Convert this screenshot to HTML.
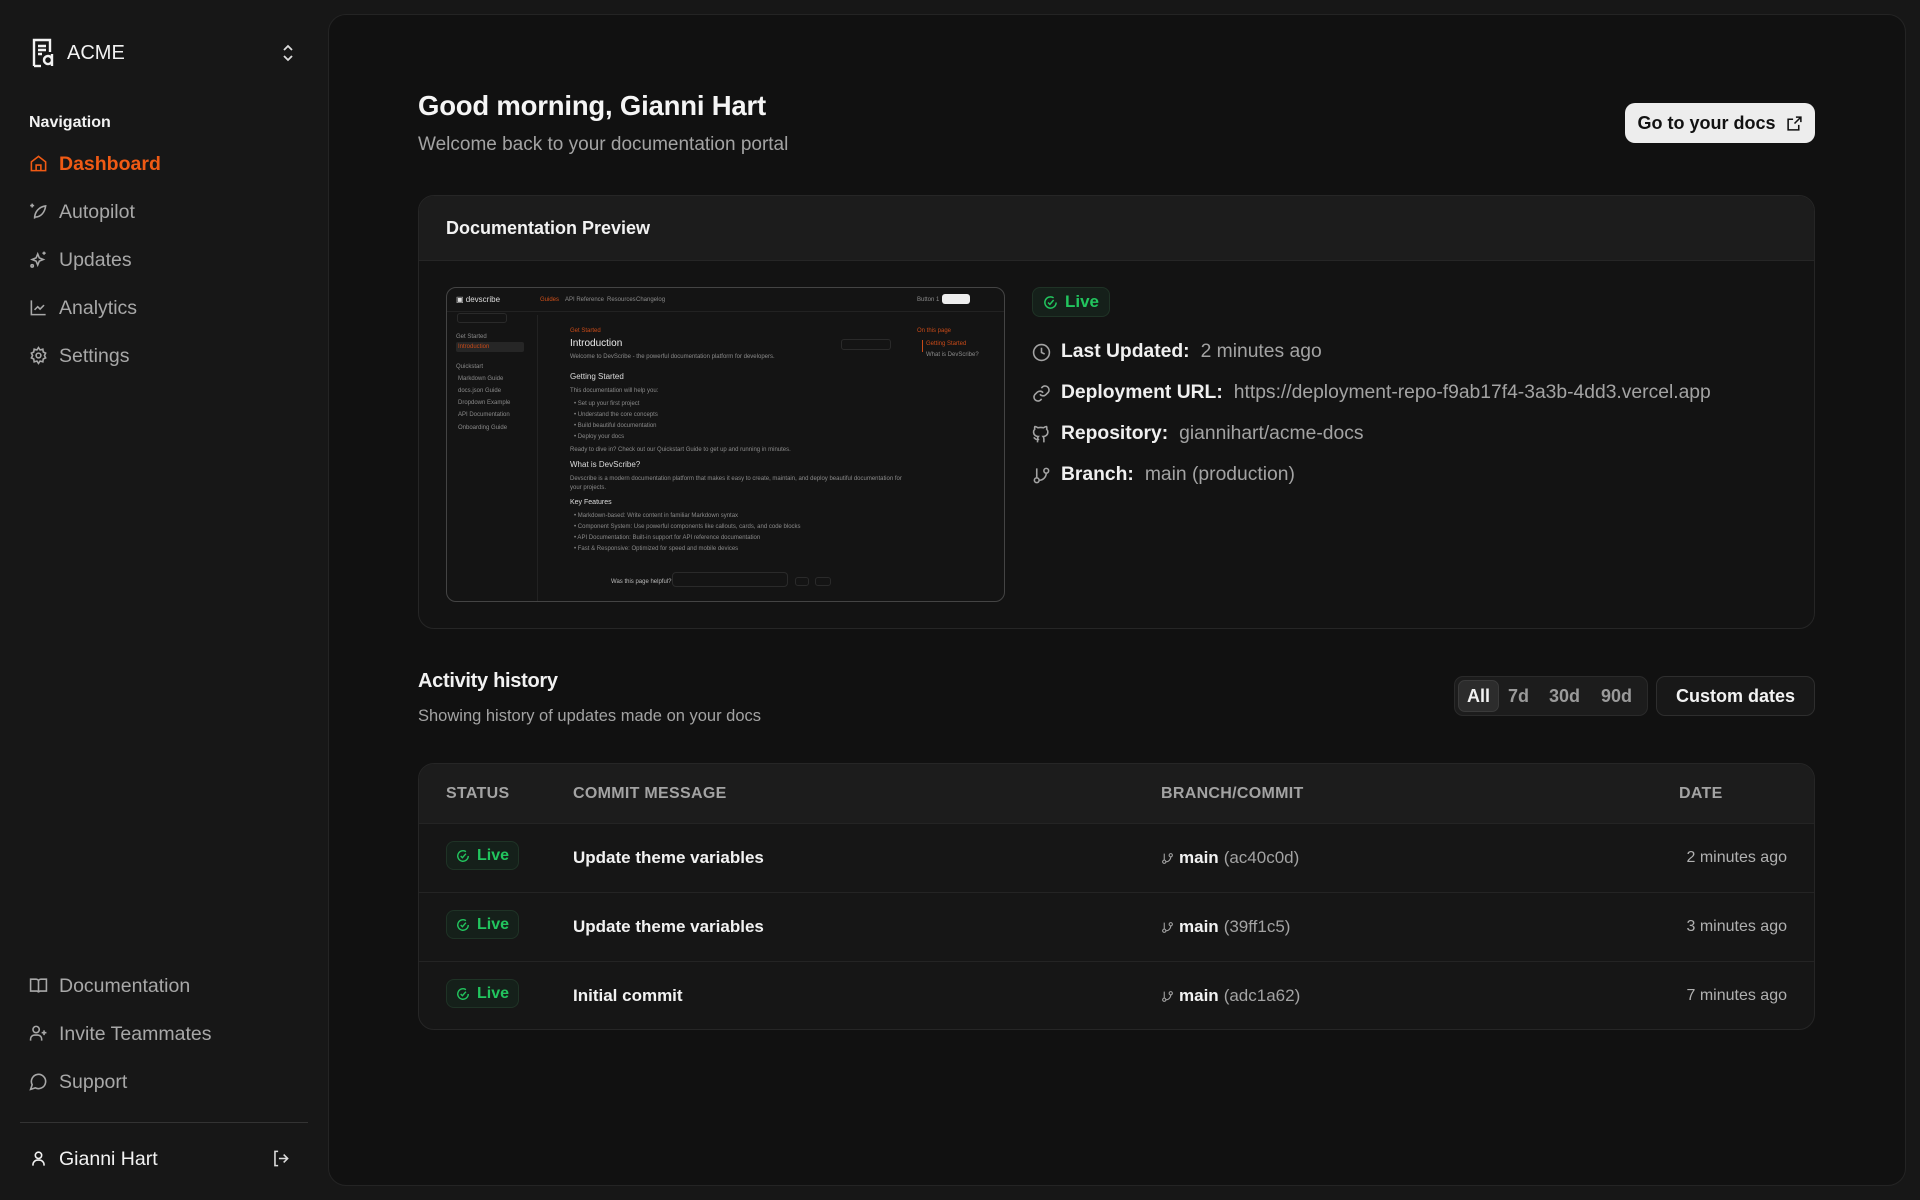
<!DOCTYPE html>
<html><head><meta charset="utf-8"><style>
*{margin:0;padding:0;box-sizing:border-box}
body{width:1920px;height:1200px;background:#171717;font-family:"Liberation Sans",sans-serif;color:#ececec;position:relative;overflow:hidden}
.a{position:absolute}
svg{display:block}
.nav{position:absolute;left:29px;display:flex;align-items:center;gap:11px;font-size:19.5px;color:#a8a8a8;height:30px}
.nav svg{width:19px;height:19px;margin-top:-2px}
.main{position:absolute;left:328px;top:14px;width:1578px;height:1172px;background:#111;border:1px solid #242424;border-radius:18px}
.card{position:absolute;border:1px solid #262626;border-radius:16px;background:#161616;overflow:hidden}
.live{display:flex;align-items:center;gap:7px;color:#22c55e;font-weight:bold;border:1px solid #1f3326;background:#15201a;border-radius:8px}
.row{position:absolute;left:1032px;display:flex;align-items:center;font-size:19.3px;color:#a3a3a3}
.row b{color:#f0f0f0;margin:0 11px 0 10px}
.th{position:absolute;top:785px;font-size:16px;color:#a3a3a3;font-weight:bold;letter-spacing:.3px}
.tr{position:absolute;left:419px;width:1395px;height:69px;border-top:1px solid #242424}
.tr .live{position:absolute;left:27px;top:17px;height:29px;padding:0 9px;font-size:16px}
.tr .msg{position:absolute;left:154px;top:24px;font-size:17px;font-weight:bold;color:#f2f2f2}
.tr .br{position:absolute;left:742px;top:24px;font-size:17px;color:#a3a3a3;display:flex;align-items:center;gap:5px}
.tr .br b{color:#f2f2f2}
.tr .dt{position:absolute;right:27px;top:25px;font-size:16px;color:#b0b0b0}
.m{position:absolute;font-size:6px;color:#8a8a8a;white-space:nowrap}
</style></head><body>
<svg class="a" style="left:31px;top:38px" width="24" height="30" viewBox="0 0 24 30" fill="none" stroke="#f2f2f2" stroke-width="2.4"><path d="M3 28V2h16v12"/><path d="M7 8h8M7 12h8M7 16h4"/><path d="M3 28h7"/><path d="M21 16v12M21 22a4 4 0 1 0 0 .1"/></svg>
<div class="a" style="left:67px;top:42px;font-size:20px;font-weight:500;color:#f2f2f2">ACME</div>
<svg class="a" style="left:282px;top:44px" width="12" height="18" viewBox="0 0 12 18" fill="none" stroke="#ddd" stroke-width="1.8"><path d="M2 6l4-4 4 4M2 12l4 4 4-4"/></svg>
<div class="a" style="left:29px;top:114px;font-size:16px;font-weight:bold;color:#f2f2f2">Navigation</div>
<div class="nav" style="top:149px;color:#f05a14;font-weight:bold"><svg viewBox="0 0 24 24" fill="none" stroke="#f05a14" stroke-width="2"><path d="M3 10l9-7 9 7v11H3z"/><path d="M9 21v-7h6v7"/></svg>Dashboard</div>
<div class="nav" style="top:197px"><svg viewBox="0 0 24 24" fill="none" stroke="#a8a8a8" stroke-width="2"><path d="M7 21c0-9 6-15 14-16-1 8-6 14-13 14"/><path d="M4 2v5M1.5 4.5h5"/></svg>Autopilot</div>
<div class="nav" style="top:245px"><svg viewBox="0 0 24 24" fill="none" stroke="#a8a8a8" stroke-width="2"><path d="M11 5l2 5 5 2-5 2-2 5-2-5-5-2 5-2z"/><path d="M19 2v4M17 4h4"/><circle cx="4" cy="20" r="1.5"/></svg>Updates</div>
<div class="nav" style="top:293px"><svg viewBox="0 0 24 24" fill="none" stroke="#a8a8a8" stroke-width="2"><path d="M3 3v18h18"/><path d="M7 15l4-4 3 3 5-5"/></svg>Analytics</div>
<div class="nav" style="top:341px"><svg viewBox="0 0 24 24" fill="none" stroke="#a8a8a8" stroke-width="2"><circle cx="12" cy="12" r="3"/><path d="M12 2l2 3 3.5-1 .5 3.5L21 9l-1.5 3 1.5 3-3 1.5-.5 3.5-3.5-1-2 3-2-3-3.5 1-.5-3.5L3 15l1.5-3L3 9l3-1.5.5-3.5 3.5 1z"/></svg>Settings</div>
<div class="nav" style="top:971px"><svg viewBox="0 0 24 24" fill="none" stroke="#a8a8a8" stroke-width="2"><path d="M2 4h7a3 3 0 0 1 3 3v14a2 2 0 0 0-2-2H2zM22 4h-7a3 3 0 0 0-3 3v14a2 2 0 0 1 2-2h8z"/></svg>Documentation</div>
<div class="nav" style="top:1019px"><svg viewBox="0 0 24 24" fill="none" stroke="#a8a8a8" stroke-width="2"><circle cx="9" cy="7" r="4"/><path d="M2 21v-2a5 5 0 0 1 5-5h4a5 5 0 0 1 5 5v2M19 8v6M16 11h6"/></svg>Invite Teammates</div>
<div class="nav" style="top:1067px"><svg viewBox="0 0 24 24" fill="none" stroke="#a8a8a8" stroke-width="2"><path d="M7.9 20A9 9 0 1 0 4 16.1L2 22z"/></svg>Support</div>
<div class="a" style="left:20px;top:1122px;width:288px;height:1px;background:#333"></div>
<div class="nav" style="top:1144px;color:#f2f2f2;font-weight:500"><svg viewBox="0 0 24 24" fill="none" stroke="#f2f2f2" stroke-width="2"><circle cx="12" cy="8" r="4"/><path d="M5 21v-1a6 6 0 0 1 6-6h2a6 6 0 0 1 6 6v1"/></svg>Gianni Hart</div>
<svg class="a" style="left:271px;top:1149px" width="19" height="19" viewBox="0 0 24 24" fill="none" stroke="#ddd" stroke-width="2"><path d="M9 21H5V3h4M16 17l5-5-5-5M21 12H10"/></svg>

<div class="main"></div>
<div class="a" style="left:418px;top:90px;font-size:27.5px;font-weight:bold;color:#f5f5f5;letter-spacing:-.2px">Good morning, Gianni Hart</div>
<div class="a" style="left:418px;top:134px;font-size:19px;color:#a3a3a3">Welcome back to your documentation portal</div>
<div class="a" style="left:1625px;top:103px;width:190px;height:40px;background:#ededed;border-radius:10px;display:flex;align-items:center;justify-content:center;gap:10px;font-size:18px;font-weight:bold;color:#111">Go to your docs<svg width="17" height="17" viewBox="0 0 24 24" fill="none" stroke="#111" stroke-width="2.2"><path d="M14 3h7v7M21 3l-9 9M18 14v7H3V6h7"/></svg></div>

<div class="card" style="left:418px;top:195px;width:1397px;height:434px;background:#131313">
 <div style="height:65px;background:#1c1c1c;border-bottom:1px solid #262626;padding:22px 27px;font-size:18px;font-weight:bold;color:#f2f2f2">Documentation Preview</div>
</div>
<div class="a" style="left:446px;top:287px;width:559px;height:315px;border:1px solid #444;border-radius:10px;background:#141414;overflow:hidden">
 <div class="a" style="left:0;top:0;width:559px;height:24px;border-bottom:1px solid #222"></div>
 <div class="m" style="left:9px;top:7px;font-size:8px;color:#ddd">▣ devscribe</div>
 <div class="m" style="left:93px;top:9px;color:#d0501a">Guides</div>
 <div class="m" style="left:118px;top:9px">API Reference</div><div class="m" style="left:160px;top:9px">Resources</div><div class="m" style="left:189px;top:9px">Changelog</div>
 <div class="m" style="left:470px;top:9px">Button 1</div>
 <div class="a" style="left:495px;top:6px;width:28px;height:10px;background:#eee;border-radius:3px"></div>
 <div class="a" style="left:90px;top:27px;width:1px;height:290px;background:#222"></div>
 <div class="a" style="left:10px;top:25px;width:50px;height:10px;border:1px solid #2a2a2a;border-radius:3px"></div>
 <div class="m" style="left:9px;top:46px">Get Started</div>
 <div class="a" style="left:9px;top:54px;width:68px;height:10px;background:#262626;border-radius:2px"></div>
 <div class="m" style="left:11px;top:56px;color:#c84a18">Introduction</div>
 <div class="m" style="left:9px;top:76px">Quickstart</div>
 <div class="m" style="left:11px;top:88px">Markdown Guide</div><div class="m" style="left:11px;top:100px">docs.json Guide</div><div class="m" style="left:11px;top:112px">Dropdown Example</div><div class="m" style="left:11px;top:124px">API Documentation</div><div class="m" style="left:11px;top:137px">Onboarding Guide</div>
 <div class="m" style="left:123px;top:40px;color:#c84a18">Get Started</div>
 <div class="m" style="left:123px;top:50px;font-size:10px;color:#eee">Introduction</div>
 <div class="m" style="left:123px;top:66px">Welcome to DevScribe - the powerful documentation platform for developers.</div>
 <div class="m" style="left:123px;top:84px;font-size:8px;color:#ddd">Getting Started</div>
 <div class="m" style="left:123px;top:100px">This documentation will help you:</div>
 <div class="m" style="left:127px;top:113px">• Set up your first project</div><div class="m" style="left:127px;top:124px">• Understand the core concepts</div><div class="m" style="left:127px;top:135px">• Build beautiful documentation</div><div class="m" style="left:127px;top:146px">• Deploy your docs</div>
 <div class="m" style="left:123px;top:159px">Ready to dive in? Check out our Quickstart Guide to get up and running in minutes.</div>
 <div class="m" style="left:123px;top:172px;font-size:8px;color:#ddd">What is DevScribe?</div>
 <div class="m" style="left:123px;top:188px">Devscribe is a modern documentation platform that makes it easy to create, maintain, and deploy beautiful documentation for</div>
 <div class="m" style="left:123px;top:197px">your projects.</div>
 <div class="m" style="left:123px;top:211px;font-size:7px;color:#ddd">Key Features</div>
 <div class="m" style="left:127px;top:225px">• Markdown-based: Write content in familiar Markdown syntax</div><div class="m" style="left:127px;top:236px">• Component System: Use powerful components like callouts, cards, and code blocks</div><div class="m" style="left:127px;top:247px">• API Documentation: Built-in support for API reference documentation</div><div class="m" style="left:127px;top:258px">• Fast &amp; Responsive: Optimized for speed and mobile devices</div>
 <div class="m" style="left:164px;top:291px;color:#bbb">Was this page helpful?</div>
 <div class="a" style="left:225px;top:284px;width:116px;height:15px;border:1px solid #2a2a2a;border-radius:4px"></div>
 <div class="a" style="left:348px;top:289px;width:14px;height:9px;border:1px solid #2a2a2a;border-radius:3px"></div><div class="a" style="left:368px;top:289px;width:16px;height:9px;border:1px solid #2a2a2a;border-radius:3px"></div>
 <div class="m" style="left:470px;top:40px;color:#c84a18">On this page</div>
 <div class="a" style="left:475px;top:52px;width:1px;height:12px;background:#c84a18"></div>
 <div class="m" style="left:479px;top:53px;color:#c84a18">Getting Started</div><div class="m" style="left:479px;top:64px">What is DevScribe?</div>
 <div class="a" style="left:394px;top:51px;width:50px;height:11px;border:1px solid #2a2a2a;border-radius:3px"></div>
</div>
<div class="a live" style="left:1032px;top:287px;height:30px;padding:0 10px;font-size:17px"><svg width="15" height="15" viewBox="0 0 24 24" fill="none" stroke="#22c55e" stroke-width="2.4"><path d="M21 12a9 9 0 1 1-4-7.5"/><path d="M8 12l3 3 6-7"/></svg>Live</div>
<div class="row" style="top:341px"><svg width="19" height="19" viewBox="0 0 24 24" fill="none" stroke="#a3a3a3" stroke-width="2"><circle cx="12" cy="12" r="10"/><path d="M12 6v6l4 2"/></svg><b>Last Updated:</b>2 minutes ago</div>
<div class="row" style="top:382px"><svg width="19" height="19" viewBox="0 0 24 24" fill="none" stroke="#a3a3a3" stroke-width="2"><path d="M10 13a5 5 0 0 0 7.5.5l3-3a5 5 0 0 0-7-7l-1.7 1.7"/><path d="M14 11a5 5 0 0 0-7.5-.5l-3 3a5 5 0 0 0 7 7l1.7-1.7"/></svg><b>Deployment URL:</b>https://deployment-repo-f9ab17f4-3a3b-4dd3.vercel.app</div>
<div class="row" style="top:423px"><svg width="19" height="19" viewBox="0 0 24 24" fill="none" stroke="#a3a3a3" stroke-width="2"><path d="M15 22v-4a4.8 4.8 0 0 0-1-3.5c3 0 6-2 6-5.5a5.4 5.4 0 0 0-1.5-3.8A5 5 0 0 0 18.4 2S17.2 1.7 14.5 3.5a13.4 13.4 0 0 0-7 0C4.8 1.7 3.6 2 3.6 2a5 5 0 0 0-.1 3.2A5.4 5.4 0 0 0 2 9c0 3.5 3 5.5 6 5.5a4.8 4.8 0 0 0-1 3.5v4M9 18c-4.5 2-5-2-7-2"/></svg><b>Repository:</b>giannihart/acme-docs</div>
<div class="row" style="top:464px"><svg width="19" height="19" viewBox="0 0 24 24" fill="none" stroke="#a3a3a3" stroke-width="2"><path d="M6 3v12"/><circle cx="18" cy="6" r="3"/><circle cx="6" cy="18" r="3"/><path d="M18 9a9 9 0 0 1-9 9"/></svg><b>Branch:</b>main (production)</div>

<div class="a" style="left:418px;top:670px;font-size:20px;font-weight:bold;color:#f2f2f2;letter-spacing:-.3px">Activity history</div>
<div class="a" style="left:418px;top:707px;font-size:16.5px;color:#a3a3a3">Showing history of updates made on your docs</div>
<div class="a" style="left:1454px;top:676px;width:194px;height:40px;background:#1c1c1c;border:1px solid #2a2a2a;border-radius:9px"></div>
<div class="a" style="left:1458px;top:680px;width:41px;height:32px;background:#2c2c2c;border:1px solid #3a3a3a;border-radius:7px"></div>
<div class="a" style="left:1467px;top:686px;font-size:18px;font-weight:bold;color:#f2f2f2">All</div>
<div class="a" style="left:1508px;top:686px;font-size:18px;font-weight:bold;color:#9a9a9a">7d</div>
<div class="a" style="left:1549px;top:686px;font-size:18px;font-weight:bold;color:#9a9a9a">30d</div>
<div class="a" style="left:1601px;top:686px;font-size:18px;font-weight:bold;color:#9a9a9a">90d</div>
<div class="a" style="left:1656px;top:676px;width:159px;height:40px;background:#181818;border:1px solid #2e2e2e;border-radius:9px;display:flex;align-items:center;justify-content:center;font-size:18px;font-weight:bold;color:#f2f2f2">Custom dates</div>

<div class="card" style="left:418px;top:763px;width:1397px;height:267px;background:#161616">
 <div style="height:60px;background:#1c1c1c"></div>
</div>
<div class="th" style="left:446px">STATUS</div>
<div class="th" style="left:573px">COMMIT MESSAGE</div>
<div class="th" style="left:1161px">BRANCH/COMMIT</div>
<div class="th" style="left:1679px">DATE</div>

<div class="tr" style="top:823px"><div class="live"><svg width="14" height="14" viewBox="0 0 24 24" fill="none" stroke="#22c55e" stroke-width="2.4"><path d="M21 12a9 9 0 1 1-4-7.5"/><path d="M8 12l3 3 6-7"/></svg>Live</div><div class="msg">Update theme variables</div><div class="br"><svg width="13" height="13" viewBox="0 0 24 24" fill="none" stroke="#a3a3a3" stroke-width="2"><path d="M6 3v12"/><circle cx="18" cy="6" r="3"/><circle cx="6" cy="18" r="3"/><path d="M18 9a9 9 0 0 1-9 9"/></svg><b>main</b>(ac40c0d)</div><div class="dt">2 minutes ago</div></div>
<div class="tr" style="top:892px"><div class="live"><svg width="14" height="14" viewBox="0 0 24 24" fill="none" stroke="#22c55e" stroke-width="2.4"><path d="M21 12a9 9 0 1 1-4-7.5"/><path d="M8 12l3 3 6-7"/></svg>Live</div><div class="msg">Update theme variables</div><div class="br"><svg width="13" height="13" viewBox="0 0 24 24" fill="none" stroke="#a3a3a3" stroke-width="2"><path d="M6 3v12"/><circle cx="18" cy="6" r="3"/><circle cx="6" cy="18" r="3"/><path d="M18 9a9 9 0 0 1-9 9"/></svg><b>main</b>(39ff1c5)</div><div class="dt">3 minutes ago</div></div>
<div class="tr" style="top:961px"><div class="live"><svg width="14" height="14" viewBox="0 0 24 24" fill="none" stroke="#22c55e" stroke-width="2.4"><path d="M21 12a9 9 0 1 1-4-7.5"/><path d="M8 12l3 3 6-7"/></svg>Live</div><div class="msg">Initial commit</div><div class="br"><svg width="13" height="13" viewBox="0 0 24 24" fill="none" stroke="#a3a3a3" stroke-width="2"><path d="M6 3v12"/><circle cx="18" cy="6" r="3"/><circle cx="6" cy="18" r="3"/><path d="M18 9a9 9 0 0 1-9 9"/></svg><b>main</b>(adc1a62)</div><div class="dt">7 minutes ago</div></div>
</body></html>
